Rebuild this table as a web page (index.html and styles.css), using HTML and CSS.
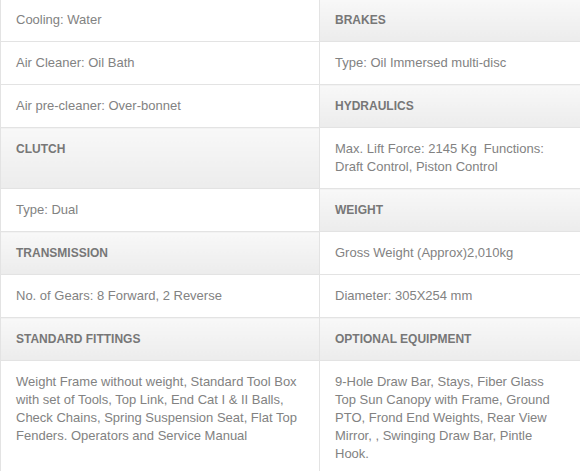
FILE: index.html
```html
<!DOCTYPE html>
<html>
<head>
<meta charset="utf-8">
<link rel="stylesheet" href="styles.css">
</head>
<body>
<table class="specs">
  <colgroup><col class="col-left"><col class="col-right"></colgroup>
  <tr><td>Cooling: Water</td><th>Brakes</th></tr>
  <tr><td>Air Cleaner: Oil Bath</td><td>Type: Oil Immersed multi-disc</td></tr>
  <tr><td>Air pre-cleaner: Over-bonnet</td><th>Hydraulics</th></tr>
  <tr><th>Clutch</th><td>Max. Lift Force: 2145 Kg&nbsp; Functions: Draft Control, Piston Control</td></tr>
  <tr><td>Type: Dual</td><th>Weight</th></tr>
  <tr><th>Transmission</th><td>Gross Weight (Approx)2,010kg</td></tr>
  <tr><td>No. of Gears: 8 Forward, 2 Reverse</td><td>Diameter: 305X254 mm</td></tr>
  <tr><th>Standard Fittings</th><th>Optional Equipment</th></tr>
  <tr class="tall"><td>Weight Frame without weight, Standard Tool Box with set of Tools, Top Link, End Cat I &amp; II Balls, Check Chains, Spring Suspension Seat, Flat Top Fenders. Operators and Service Manual</td><td>9-Hole Draw Bar, Stays, Fiber Glass Top Sun Canopy with Frame, Ground PTO, Frond End Weights, Rear View Mirror, , Swinging Draw Bar, Pintle Hook.</td></tr>
</table>
</body>
</html>
```
FILE: styles.css
```css
html, body {
  margin: 0;
  padding: 0;
  background: #ffffff;
}
.specs {
  border-collapse: collapse;
  table-layout: fixed;
  width: 581px;
  margin-top: -2px;
  font-family: "Liberation Sans", Arial, sans-serif;
  font-size: 13px;
  line-height: 18px;
  color: #828282;
}
.col-left { width: 319px; }
.col-right { width: 262px; }
.specs td, .specs th {
  border: 1px solid #e3e3e3;
  padding: 12px 15px 12px 15px;
  vertical-align: top;
  text-align: left;
}
.specs th {
  font-size: 12px;
  font-weight: bold;
  text-transform: uppercase;
  color: #777777;
  background: linear-gradient(#f8f8f8, #ececec);
}
.specs td {
  background: #ffffff;
}
.tall td {
  height: 110px;
}
```
